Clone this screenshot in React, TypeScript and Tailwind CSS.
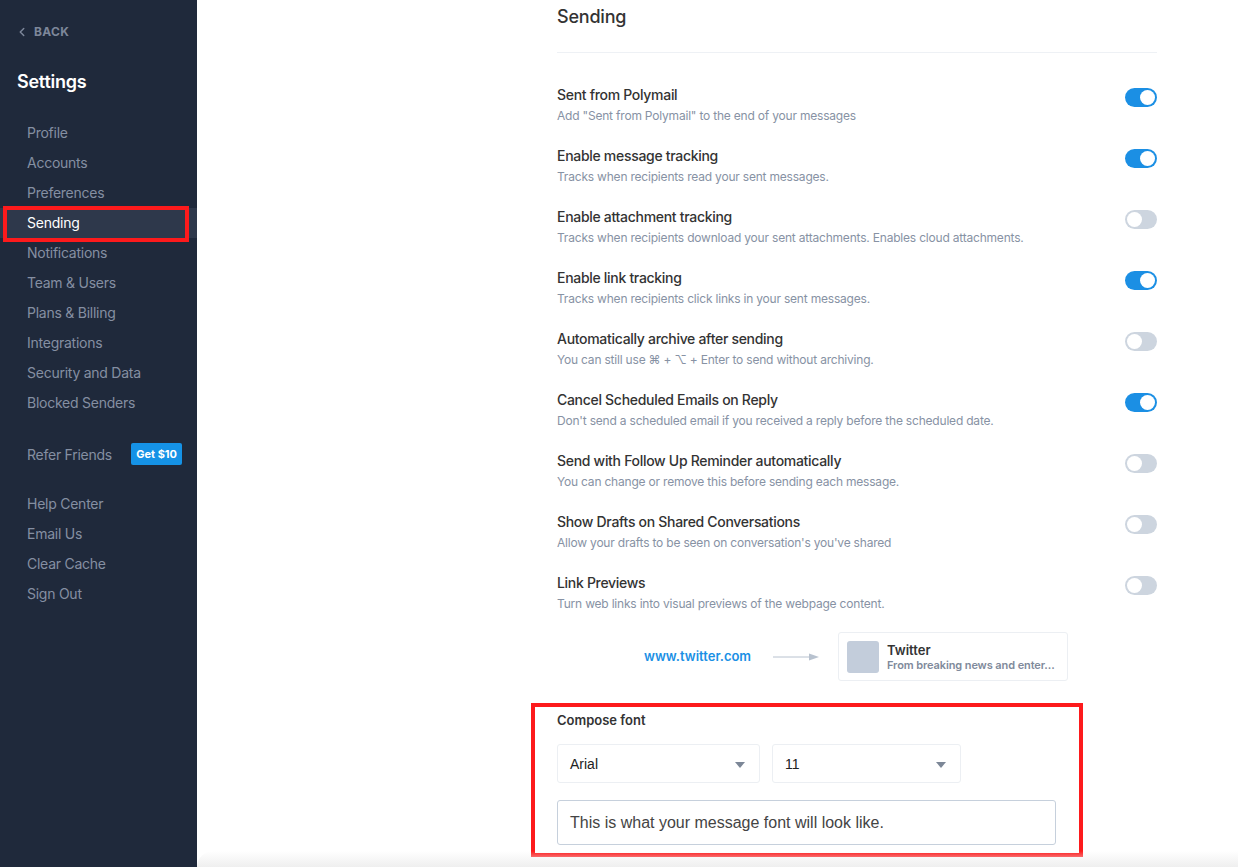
import { ChevronLeft } from 'lucide-react';

const navTop = ['Profile', 'Accounts', 'Preferences', 'Sending', 'Notifications', 'Team & Users', 'Plans & Billing', 'Integrations', 'Security and Data', 'Blocked Senders'];
const navBottom = ['Help Center', 'Email Us', 'Clear Cache', 'Sign Out'];

const settings = [
  { title: 'Sent from Polymail', desc: 'Add "Sent from Polymail" to the end of your messages', on: true },
  { title: 'Enable message tracking', desc: 'Tracks when recipients read your sent messages.', on: true },
  { title: 'Enable attachment tracking', desc: 'Tracks when recipients download your sent attachments. Enables cloud attachments.', on: false },
  { title: 'Enable link tracking', desc: 'Tracks when recipients click links in your sent messages.', on: true },
  { title: 'Automatically archive after sending', desc: 'You can still use \u2318 + \u2325 + Enter to send without archiving.', on: false },
  { title: 'Cancel Scheduled Emails on Reply', desc: "Don't send a scheduled email if you received a reply before the scheduled date.", on: true },
  { title: 'Send with Follow Up Reminder automatically', desc: 'You can change or remove this before sending each message.', on: false },
  { title: 'Show Drafts on Shared Conversations', desc: "Allow your drafts to be seen on conversation's you've shared", on: false },
  { title: 'Link Previews', desc: 'Turn web links into visual previews of the webpage content.', on: false },
];

function Toggle({ on }: { on: boolean }) {
  return (
    <div
      className={
        on
          ? 'mt-[3px] flex h-[19px] w-[32px] shrink-0 items-center justify-end rounded-full bg-[#1b8fe4] px-[2px]'
          : 'mt-[3px] flex h-[19px] w-[32px] shrink-0 items-center justify-start rounded-full bg-[#cdd5df] px-[2px]'
      }
    >
      <div className="h-[15px] w-[15px] rounded-full bg-white" />
    </div>
  );
}

function Select({ value, width }: { value: string; width: string }) {
  return (
    <div className={`flex h-[39px] items-center justify-between rounded-[3px] border border-[#eceff3] pl-[12px] pr-[12px] pt-[2px] ${width}`}>
      <span className="text-[14px] text-[#222]">{value}</span>
      <svg width="10" height="6" viewBox="0 0 10 6" className="mr-[2px]">
        <path d="M0 0h10L5 6z" fill="#7c8797" />
      </svg>
    </div>
  );
}

export default function App() {
  return (
    <div className="flex h-[867px] w-full overflow-hidden bg-white font-['Inter',sans-serif]">
      <aside className="flex w-[197px] shrink-0 flex-col bg-[#1f293b] tracking-[-0.25px]">
        <div className="ml-[15px] mt-[24px] flex h-[16px] items-center text-[12px] font-bold tracking-[0.3px] text-[#7d879a]">
          <ChevronLeft className="h-[14px] w-[14px]" strokeWidth={2.5} />
          <span className="ml-[5px]">BACK</span>
        </div>
        <div className="ml-[17px] mt-[30px] text-[18px] font-semibold leading-[24px] text-white">Settings</div>
        <ul className="mt-[24px]">
          {navTop.map((name) => (
            <li key={name} className={name === 'Sending' ? 'relative h-[30px] bg-[#2e384b]' : 'h-[30px]'}>
              <span
                className={
                  name === 'Sending'
                    ? 'block pl-[27px] text-[14px] leading-[30px] text-white'
                    : 'block pl-[27px] text-[14px] leading-[30px] text-[#858fa2]'
                }
              >
                {name}
              </span>
              {name === 'Sending' && (
                <div className="absolute bottom-[-4px] left-[3px] right-[8px] top-[-2px] border-4 border-[#fd1a1c]" />
              )}
            </li>
          ))}
        </ul>
        <div className="mt-[21px] flex h-[30px] items-center justify-between pl-[27px] pr-[15px]">
          <span className="text-[14px] text-[#858fa2]">Refer Friends</span>
          <span className="flex h-[22px] items-center rounded-[2px] bg-[#1592e6] px-[5px] text-[11px] font-bold tracking-normal text-white">Get $10</span>
        </div>
        <ul className="mt-[20px]">
          {navBottom.map((name) => (
            <li key={name} className="h-[30px] pl-[27px] text-[14px] leading-[30px] text-[#858fa2]">
              {name}
            </li>
          ))}
        </ul>
      </aside>

      <main className="relative flex-1">
        <div className="ml-[360px] w-[600px]">
          <div className="h-[53px] border-b border-[#eef1f5] pt-[5px] text-[18px] font-medium leading-[24px] tracking-[-0.2px] text-[#333]">Sending</div>
          <div className="mt-[32px]">
            {settings.map((s, i) => (
              <div key={s.title} className={i === settings.length - 1 ? 'flex justify-between' : 'flex h-[61px] justify-between'}>
                <div>
                  <div className="text-[14px] font-medium leading-[20px] tracking-[-0.3px] text-[#333]">{s.title}</div>
                  <div className="mt-[3px] text-[12px] leading-[16px] tracking-[-0.2px] text-[#8792a4]">{s.desc}</div>
                </div>
                <Toggle on={s.on} />
              </div>
            ))}
          </div>

          <div className="mt-[20px] flex items-center pl-[87px]">
            <span className="w-[108px] text-[13px] font-semibold text-[#1a90e5]">www.twitter.com</span>
            <svg width="46" height="8" viewBox="0 0 46 8" className="ml-[21px]">
              <line x1="0" y1="4" x2="38" y2="4" stroke="#b8c2cf" strokeWidth="1" />
              <path d="M36 0.5L46 4L36 7.5z" fill="#b8c2cf" />
            </svg>
            <div className="ml-[19px] flex h-[49px] w-[230px] items-center rounded-[3px] border border-[#eceff3] px-[8px]">
              <div className="h-[32px] w-[32px] shrink-0 rounded-[3px] bg-[#c3cddb]" />
              <div className="ml-[8px] min-w-0">
                <div className="text-[13px] font-semibold leading-[16px] text-[#333]">Twitter</div>
                <div className="whitespace-nowrap text-[11px] font-semibold leading-[14px] tracking-[-0.1px] text-[#7f8a9b]">From breaking news and enter...</div>
              </div>
            </div>
          </div>

          <div className="ml-[-26px] mt-[22px] w-[552px] border-4 border-[#fd1a1c] px-[22px] pb-[8px] pt-[5px]">
            <div className="text-[13px] font-semibold leading-[16px] text-[#333]">Compose font</div>
            <div className="mt-[16px] flex gap-[12px] font-['Liberation_Sans',Arial,sans-serif]">
              <Select value="Arial" width="w-[203px]" />
              <Select value="11" width="w-[189px]" />
            </div>
            <div className="mt-[17px] flex h-[45px] w-[499px] items-center rounded-[3px] border border-[#c6d0dc] pl-[12px] font-['Liberation_Sans',Arial,sans-serif] text-[16px] text-[#444]">
              This is what your message font will look like.
            </div>
          </div>
        </div>
        <div className="absolute inset-x-0 bottom-0 h-[16px] rounded-tl-[40px] bg-linear-to-b from-white/0 to-[#efefef]" />
      </main>
    </div>
  );
}
